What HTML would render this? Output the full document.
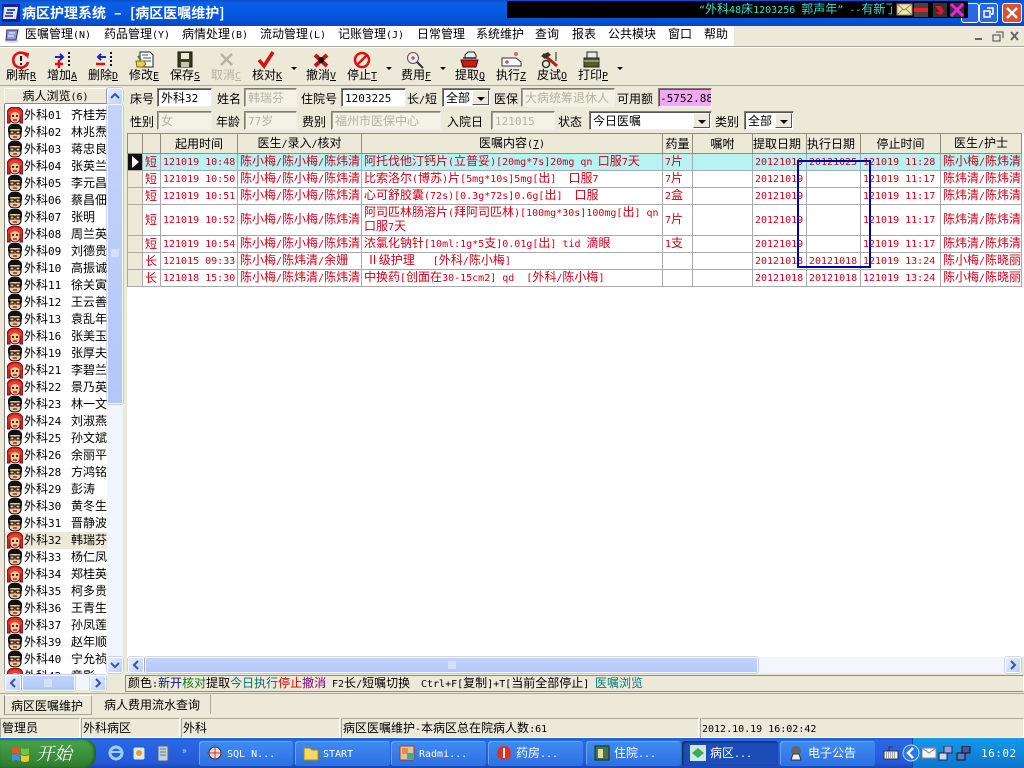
<!DOCTYPE html>
<html lang="zh"><head><meta charset="utf-8"><title>病区护理系统</title>
<style>
html,body{margin:0;padding:0;width:1024px;height:768px;overflow:hidden;background:#ece9d8}
body{position:relative;font:12px/14px "WenQuanYi Zen Hei","Noto Sans CJK SC",sans-serif;color:#000}
i{font:normal 10px/14px "DejaVu Sans Mono","Liberation Mono",monospace}
.a{position:absolute;white-space:nowrap}
.bx{position:absolute;box-sizing:border-box;overflow:hidden;white-space:nowrap}
.inp{position:absolute;box-sizing:border-box;height:19px;background:#fff;border:1px solid;border-color:#7f7d72 #eee #eee #7f7d72;box-shadow:inset 1px 1px 0 #555;padding:2px 0 0 3px;overflow:hidden;white-space:nowrap}
.inp i{font-size:11px;color:inherit}
.dis{background:#f3f2e4;color:#b4b3a2;box-shadow:inset 1px 1px 0 #a8a698}
.arr{position:absolute;right:1px;top:1px;bottom:1px;width:17px;background:#ece9d8;border:1px solid;border-color:#fff #555 #555 #fff;box-sizing:border-box}
.arr:after{content:"";position:absolute;left:4px;top:6px;border:4px solid transparent;border-top:4px solid #000;border-bottom:0}
.tb{position:absolute;top:68px;width:42px;text-align:center;white-space:nowrap}
.tb i,.und{text-decoration:underline}
.dd{position:absolute;top:67px;border:3px solid transparent;border-top:3px solid #000;border-bottom:0}
table{position:absolute;left:127px;top:133px;border-collapse:collapse;table-layout:fixed;width:894px;color:#d00018;background:#fff}
td,th{border:1px solid #a9a9a9;padding:0 0 0 2px;font-weight:normal;overflow:hidden;white-space:nowrap;height:16px;line-height:10px;vertical-align:middle}
td i,th i{line-height:10px}
th{background:#ece9d8;color:#000;text-align:center;height:19px;border-color:#8f8d80;padding:0}
td.ind{background:#ece9d8;padding:0}
td.w{white-space:normal;word-break:break-all;line-height:12px}
td.w i{line-height:12px}
tr.sel td{background:#b6f3f3}
.p{position:absolute;left:5px;width:102px;height:17px;overflow:hidden;white-space:nowrap}
.p svg{position:absolute;left:2px;top:0}
.p b{position:absolute;left:19px;top:1px;font-weight:normal}
.p b i{font-size:11px}
.p u{position:absolute;left:66px;top:1px;text-decoration:none}
.sbtn{position:absolute;box-sizing:border-box;width:16px;height:16px;background:linear-gradient(135deg,#e8effe,#bccff8);border:1px solid #fff;border-radius:2px;box-shadow:0 0 0 .5px #9db4e6}
.sbtn svg{display:block;margin:2px}
.thumb{position:absolute;box-sizing:border-box;background:linear-gradient(#c3d4fa,#b2c8f6);border:1px solid #f4f7ff;border-radius:2px;box-shadow:0 0 0 .5px #98ade0}
.st{position:absolute;top:718px;height:20px;box-sizing:border-box;border:1px solid;border-color:#aca899 #fff #fff #aca899;padding:2px 0 0 1px;white-space:nowrap;overflow:hidden}
.task{position:absolute;top:741px;height:25px;box-sizing:border-box;border-radius:3px;background:linear-gradient(#3f8cf3,#2f6fe0);color:#fff;padding:5px 0 0 28px;white-space:nowrap;box-shadow:inset 1px 1px 0 #6aa4f5}
.task svg{position:absolute;left:8px;top:4px}
</style></head><body>
<svg width="0" height="0" style="position:absolute"><defs>
<symbol id="m" viewBox="0 0 16 17"><path d="M2 5Q2 0 8 0t6 5v6q0 5-6 5t-6-5z" fill="#f6c79a" stroke="#000"/><path d="M1 9V4Q2 0 8 0t7 4v5l-1-3-2-1H4L2 6z" fill="#111"/><path d="M3 7h4v3H3zM9 7h4v3H9zM7 8h2" fill="none" stroke="#000"/><path d="M6 13h4" stroke="#a22" stroke-width="1.500"/></symbol>
<symbol id="f" viewBox="0 0 16 17"><path d="M0 16V6Q1 0 8 0t8 6v10h-3V8H3v8z" fill="#d42a1c" stroke="#702"/><path d="M3 6q5-3 10 0v6q-1 4-5 4t-5-4z" fill="#f6c79a" stroke="#611"/><path d="M5 9h2M9 9h2" stroke="#000" stroke-width="1.500"/><path d="M6 13h4" stroke="#c11" stroke-width="1.500"/><path d="M2 7Q8 0 14 7" fill="none" stroke="#e8402c" stroke-width="3"/></symbol>
<symbol id="up" viewBox="0 0 10 10"><path d="M1 7l4-4 4 4" fill="none" stroke="#34589c" stroke-width="2"/></symbol>
<symbol id="dn" viewBox="0 0 10 10"><path d="M1 3l4 4 4-4" fill="none" stroke="#34589c" stroke-width="2"/></symbol>
<symbol id="lf" viewBox="0 0 10 10"><path d="M7 1L3 5l4 4" fill="none" stroke="#34589c" stroke-width="2"/></symbol>
<symbol id="rt" viewBox="0 0 10 10"><path d="M3 1l4 4-4 4" fill="none" stroke="#34589c" stroke-width="2"/></symbol>
</defs></svg>

<!-- title bar -->
<div class="bx" style="left:0;top:0;width:1024px;height:26px;background:linear-gradient(#0a4fc8,#0b5fe6 12%,#0455dc 70%,#0648c0)"></div>
<svg class="a" style="left:2px;top:4px" width="18" height="18" viewBox="0 0 18 18"><rect width="18" height="18" fill="#10249a"/><path d="M2 3h14l-2 12H1z" fill="#dfe6ff"/><path d="M5 6h8M4 9h7M3 12h8" stroke="#10249a" stroke-width="1.600"/></svg>
<div class="a" style="left:22px;top:5px;color:#fff;font-size:14px;line-height:16px;font-weight:bold">病区护理系统</div>
<div class="a" style="left:114px;top:5px;color:#fff;font-size:14px;line-height:16px;font-weight:bold">–</div>
<div class="a" style="left:130px;top:5px;color:#fff;font-size:14px;line-height:16px;font-weight:bold">[病区医嘱维护]</div>
<div class="bx" style="left:979px;top:3px;width:19px;height:20px;border:1px solid #fff;border-radius:3px;background:#2c68e6"><svg width="17" height="18"><path d="M7 4h6v6h-2M4 7h6v6H4z" fill="none" stroke="#fff" stroke-width="1.500"/></svg></div>
<div class="bx" style="left:1002px;top:3px;width:20px;height:20px;border:1px solid #fff;border-radius:3px;background:#dc5030"><svg width="18" height="18"><path d="M4 4l10 10M14 4L4 14" stroke="#fff" stroke-width="2.400"/></svg></div>
<div class="bx" style="left:961px;top:3px;width:18px;height:20px;border:1px solid #fff;border-radius:3px;background:#2c68e6"></div>
<div class="bx" style="left:507px;top:1px;width:461px;height:17px;background:#000"></div>
<div class="bx" style="left:699px;top:2px;width:193px;height:15px;color:#33dfd8"><i>“</i>外科<i>48</i>床<i>1203256 </i>郭声年<i>” --</i>有新了</div>
<svg class="a" style="left:896px;top:2px" width="70" height="16" viewBox="0 0 70 16"><rect x="1" y="2" width="15" height="11" fill="#efe6a0" stroke="#887"/><path d="M1 2l7 6 8-6M1 13l6-6M16 13l-6-6" fill="none" stroke="#887"/><rect x="18" y="1" width="14" height="14" fill="#444"/><rect x="18" y="6" width="14" height="4" fill="#e22"/><rect x="37" y="1" width="14" height="14" fill="#333"/><path d="M39 4h6l3 5-3 4-6-3h5z" fill="#e0182a"/><rect x="54" y="1" width="14" height="14" fill="#333"/><path d="M55 2l12 12M67 2L55 14" stroke="#f020e8" stroke-width="3"/></svg>

<!-- menu -->
<div class="bx" style="left:0;top:26px;width:734px;height:20px;background:#fff"></div>
<svg class="a" style="left:4px;top:27px" width="16" height="17" viewBox="0 0 16 17"><ellipse cx="8" cy="14" rx="7" ry="2" fill="#d9d9ee"/><path d="M3 3h11l-2 10H2z" fill="#8a9ae0" stroke="#334"/><path d="M5 6h6M4 9h6" stroke="#fff"/></svg>
<div class="a" style="left:25px;top:27px">医嘱管理<i>(N)</i></div>
<div class="a" style="left:104px;top:27px">药品管理<i>(Y)</i></div>
<div class="a" style="left:182px;top:27px">病情处理<i>(B)</i></div>
<div class="a" style="left:260px;top:27px">流动管理<i>(L)</i></div>
<div class="a" style="left:338px;top:27px">记账管理<i>(J)</i></div>
<div class="a" style="left:417px;top:27px">日常管理</div>
<div class="a" style="left:476px;top:27px">系统维护</div>
<div class="a" style="left:535px;top:27px">查询</div>
<div class="a" style="left:572px;top:27px">报表</div>
<div class="a" style="left:608px;top:27px">公共模块</div>
<div class="a" style="left:668px;top:27px">窗口</div>
<div class="a" style="left:704px;top:27px">帮助</div>
<svg class="a" style="left:972px;top:27px" width="50" height="18" viewBox="0 0 50 18"><path d="M3 12h7" stroke="#666" stroke-width="2"/><path d="M24 5h7v6M21 8h7v6h-7z" fill="none" stroke="#666" stroke-width="1.300"/><path d="M39 5l7 8M46 5l-7 8" stroke="#666" stroke-width="2"/></svg>

<!-- toolbar -->
<div class="bx" style="left:0;top:46px;width:1024px;height:1px;background:#aca899"></div>
<div class="bx" style="left:0;top:47px;width:1024px;height:1px;background:#fff"></div>
<div class="bx" style="left:0;top:85px;width:1024px;height:1px;background:#aca899"></div>
<svg class="a" style="left:0;top:51px" width="640" height="18" viewBox="0 0 640 18">
<path d="M27 5a7.500 7.500 0 1 0 1 6" fill="none" stroke="#e01010" stroke-width="2.600"/><path d="M24 1l5 1-1 6z" fill="#e01010"/><path d="M21 5v5M21 12v2" stroke="#111" stroke-width="2"/>
<path d="M55 6h7M60 3l3 3-3 3" fill="none" stroke="#1a22c8" stroke-width="2"/><path d="M55 13h8M59 9v8" stroke="#e01010" stroke-width="2.500"/><path d="M68 2h2M68 6h2M68 10h2M68 14h2" stroke="#111" stroke-width="2"/>
<path d="M98 6h8M101 3l-3 3 3 3" fill="none" stroke="#1a22c8" stroke-width="2"/><path d="M96 13h9" stroke="#e01010" stroke-width="2.500"/><path d="M110 2h2M110 6h2M110 10h2M110 14h2" stroke="#111" stroke-width="2"/>
<path d="M140 1h10l3 3v12h-13z" fill="#fff" stroke="#222"/><path d="M142 4h6M143 7h8M143 10h8" stroke="#555"/><path d="M136 10h8l2 3-3 3h-6z" fill="#f2c94c" stroke="#7a6a10"/><path d="M138 5l3 4" stroke="#2a8a30" stroke-width="2"/>
<path d="M178 1h14v15h-14z" fill="#3e3e18" stroke="#111"/><rect x="181" y="2" width="8" height="6" fill="#e8e8d8"/><rect x="181" y="11" width="8" height="5" fill="#c4c4b8"/>
<path d="M221 3l11 11M232 3l-11 11" stroke="#b4b2a6" stroke-width="2.500"/>
<path d="M259 9l5 6 9-14" fill="none" stroke="#dd1010" stroke-width="3.500"/>
<path d="M315 4l12 11M327 4l-12 11" stroke="#d01010" stroke-width="4"/><circle cx="321" cy="9" r="3" fill="#111"/>
<circle cx="362" cy="9" r="7" fill="none" stroke="#e01010" stroke-width="2.500"/><path d="M357 14l10-10" stroke="#e01010" stroke-width="2.500"/>
<circle cx="413" cy="7" r="5.500" fill="#f4eef0" stroke="#555"/><path d="M411 7h4M413 5v4" stroke="#d01030"/><path d="M417 11l6 6" stroke="#333" stroke-width="2"/>
<path d="M465 4l3-3h6l2 3v3h-11z" fill="#eee" stroke="#222"/><path d="M461 9h17l-2 7h-13z" fill="#d01818" stroke="#400"/><path d="M463 7h13" stroke="#222" stroke-width="1.500"/>
<path d="M502 7h14l5 4v4h-19z" fill="#f8f8f8" stroke="#333"/><path d="M507 9v4M505 11h4" stroke="#d01818"/><circle cx="516" cy="3" r="2" fill="#e86070"/>
<path d="M543 3l14 12" stroke="#b82010" stroke-width="3"/><path d="M541 5l7-4 3 3-6 4z" fill="#332"/><circle cx="546" cy="13" r="3.500" fill="none" stroke="#333" stroke-width="1.500"/><path d="M556 1v9" stroke="#222"/>
<path d="M587 1h10v6h-10z" fill="#e8e8e8" stroke="#222"/><path d="M584 7h15v9h-15z" fill="#5a5a2a" stroke="#222"/><path d="M584 10h15" stroke="#ccc"/>
</svg>
<div class="tb" style="left:0">刷新<i>R</i></div>
<div class="tb" style="left:41px">增加<i>A</i></div>
<div class="tb" style="left:82px">删除<i>D</i></div>
<div class="tb" style="left:123px">修改<i>E</i></div>
<div class="tb" style="left:164px">保存<i>S</i></div>
<div class="tb" style="left:205px;color:#b4b2a6">取消<i>C</i></div>
<div class="tb" style="left:246px">核对<i>K</i></div><div class="dd" style="left:291px"></div>
<div class="tb" style="left:300px">撤消<i>V</i></div>
<div class="tb" style="left:341px">停止<i>T</i></div><div class="dd" style="left:386px"></div>
<div class="tb" style="left:395px">费用<i>F</i></div><div class="dd" style="left:440px"></div>
<div class="tb" style="left:449px">提取<i>Q</i></div>
<div class="tb" style="left:490px">执行<i>Z</i></div>
<div class="tb" style="left:531px">皮试<i>O</i></div>
<div class="tb" style="left:572px">打印<i>P</i></div><div class="dd" style="left:617px"></div>

<!-- left panel -->
<div class="bx" style="left:4px;top:88px;width:103px;height:16px;background:#ece9d8;border:1px solid;border-color:#fff #888 #888 #fff;text-align:center;line-height:13px">病人浏览<i>(6)</i></div>
<div class="bx" style="left:4px;top:104px;width:103px;height:570px;background:#fff;border-left:1px solid #808080"></div>
<div class="p" style="top:107px"><svg width="16" height="17"><use href="#f"/></svg><b>外科<i>01</i></b><u>齐桂芳</u></div>
<div class="p" style="top:124px"><svg width="16" height="17"><use href="#m"/></svg><b>外科<i>02</i></b><u>林兆焘</u></div>
<div class="p" style="top:141px"><svg width="16" height="17"><use href="#m"/></svg><b>外科<i>03</i></b><u>蒋忠良</u></div>
<div class="p" style="top:158px"><svg width="16" height="17"><use href="#f"/></svg><b>外科<i>04</i></b><u>张英兰</u></div>
<div class="p" style="top:175px"><svg width="16" height="17"><use href="#m"/></svg><b>外科<i>05</i></b><u>李元昌</u></div>
<div class="p" style="top:192px"><svg width="16" height="17"><use href="#m"/></svg><b>外科<i>06</i></b><u>蔡昌佃</u></div>
<div class="p" style="top:209px"><svg width="16" height="17"><use href="#m"/></svg><b>外科<i>07</i></b><u>张明</u></div>
<div class="p" style="top:226px"><svg width="16" height="17"><use href="#f"/></svg><b>外科<i>08</i></b><u>周兰英</u></div>
<div class="p" style="top:243px"><svg width="16" height="17"><use href="#m"/></svg><b>外科<i>09</i></b><u>刘德贵</u></div>
<div class="p" style="top:260px"><svg width="16" height="17"><use href="#m"/></svg><b>外科<i>10</i></b><u>高振诚</u></div>
<div class="p" style="top:277px"><svg width="16" height="17"><use href="#m"/></svg><b>外科<i>11</i></b><u>徐关寅</u></div>
<div class="p" style="top:294px"><svg width="16" height="17"><use href="#m"/></svg><b>外科<i>12</i></b><u>王云善</u></div>
<div class="p" style="top:311px"><svg width="16" height="17"><use href="#m"/></svg><b>外科<i>13</i></b><u>袁乱年</u></div>
<div class="p" style="top:328px"><svg width="16" height="17"><use href="#f"/></svg><b>外科<i>16</i></b><u>张美玉</u></div>
<div class="p" style="top:345px"><svg width="16" height="17"><use href="#m"/></svg><b>外科<i>19</i></b><u>张厚夫</u></div>
<div class="p" style="top:362px"><svg width="16" height="17"><use href="#f"/></svg><b>外科<i>21</i></b><u>李碧兰</u></div>
<div class="p" style="top:379px"><svg width="16" height="17"><use href="#f"/></svg><b>外科<i>22</i></b><u>景乃英</u></div>
<div class="p" style="top:396px"><svg width="16" height="17"><use href="#m"/></svg><b>外科<i>23</i></b><u>林一文</u></div>
<div class="p" style="top:413px"><svg width="16" height="17"><use href="#f"/></svg><b>外科<i>24</i></b><u>刘淑燕</u></div>
<div class="p" style="top:430px"><svg width="16" height="17"><use href="#m"/></svg><b>外科<i>25</i></b><u>孙文斌</u></div>
<div class="p" style="top:447px"><svg width="16" height="17"><use href="#f"/></svg><b>外科<i>26</i></b><u>余丽平</u></div>
<div class="p" style="top:464px"><svg width="16" height="17"><use href="#m"/></svg><b>外科<i>28</i></b><u>方鸿铭</u></div>
<div class="p" style="top:481px"><svg width="16" height="17"><use href="#m"/></svg><b>外科<i>29</i></b><u>彭涛</u></div>
<div class="p" style="top:498px"><svg width="16" height="17"><use href="#m"/></svg><b>外科<i>30</i></b><u>黄冬生</u></div>
<div class="p" style="top:515px"><svg width="16" height="17"><use href="#m"/></svg><b>外科<i>31</i></b><u>晋静波</u></div>
<div class="p" style="top:532px;background:#ece9d8"><svg width="16" height="17"><use href="#f"/></svg><b>外科<i>32</i></b><u>韩瑞芬</u></div>
<div class="p" style="top:549px"><svg width="16" height="17"><use href="#m"/></svg><b>外科<i>33</i></b><u>杨仁凤</u></div>
<div class="p" style="top:566px"><svg width="16" height="17"><use href="#f"/></svg><b>外科<i>34</i></b><u>郑桂英</u></div>
<div class="p" style="top:583px"><svg width="16" height="17"><use href="#m"/></svg><b>外科<i>35</i></b><u>柯多贵</u></div>
<div class="p" style="top:600px"><svg width="16" height="17"><use href="#m"/></svg><b>外科<i>36</i></b><u>王青生</u></div>
<div class="p" style="top:617px"><svg width="16" height="17"><use href="#f"/></svg><b>外科<i>37</i></b><u>孙凤莲</u></div>
<div class="p" style="top:634px"><svg width="16" height="17"><use href="#m"/></svg><b>外科<i>39</i></b><u>赵年顺</u></div>
<div class="p" style="top:651px"><svg width="16" height="17"><use href="#m"/></svg><b>外科<i>40</i></b><u>宁允祯</u></div>
<div class="p" style="top:668px;height:6px"><svg width="16" height="17"><use href="#f"/></svg><b>外科<i>42</i></b><u>章影</u></div>
<!-- left v scroll -->
<div class="bx" style="left:107px;top:88px;width:16px;height:585px;background:#f2f5fe"></div>
<div class="sbtn" style="left:107px;top:88px"><svg width="10" height="10"><use href="#up"/></svg></div>
<div class="thumb" style="left:107px;top:104px;width:16px;height:300px"></div>
<svg class="a" style="left:111px;top:249px" width="8" height="8"><path d="M0 1h8M0 3h8M0 5h8M0 7h8" stroke="#eef3ff"/></svg>
<div class="sbtn" style="left:107px;top:657px"><svg width="10" height="10"><use href="#dn"/></svg></div>
<!-- left h scroll -->
<div class="bx" style="left:4px;top:674px;width:103px;height:16px;background:#f2f5fe"></div>
<div class="sbtn" style="left:5px;top:675px"><svg width="10" height="10"><use href="#lf"/></svg></div>
<div class="thumb" style="left:22px;top:675px;width:53px;height:16px"></div>
<svg class="a" style="left:44px;top:679px" width="8" height="8"><path d="M1 0v8M3 0v8M5 0v8M7 0v8" stroke="#eef3ff"/></svg>
<div class="sbtn" style="left:90px;top:675px"><svg width="10" height="10"><use href="#rt"/></svg></div>

<!-- form -->
<div class="a" style="left:130px;top:92px">床号</div>
<div class="inp" style="left:157px;top:88px;width:55px">外科<i>32</i></div>
<div class="a" style="left:217px;top:92px">姓名</div>
<div class="inp dis" style="left:244px;top:88px;width:53px">韩瑞芬</div>
<div class="a" style="left:301px;top:92px">住院号</div>
<div class="inp" style="left:341px;top:88px;width:65px"><i>1203225</i></div>
<div class="a" style="left:407px;top:92px">长<i>/</i>短</div>
<div class="inp" style="left:442px;top:88px;width:49px">全部<span class="arr"></span></div>
<div class="a" style="left:494px;top:92px">医保</div>
<div class="inp dis" style="left:521px;top:88px;width:94px">大病统筹退休人</div>
<div class="a" style="left:617px;top:92px">可用额</div>
<div class="inp" style="left:658px;top:88px;width:54px;background:#f7a6f7;padding-left:1px"><i>-5752.88</i></div>
<div class="a" style="left:130px;top:115px">性别</div>
<div class="inp dis" style="left:157px;top:111px;width:55px">女</div>
<div class="a" style="left:216px;top:115px">年龄</div>
<div class="inp dis" style="left:244px;top:111px;width:53px"><i>77</i>岁</div>
<div class="a" style="left:302px;top:115px">费别</div>
<div class="inp dis" style="left:331px;top:111px;width:110px">福州市医保中心</div>
<div class="a" style="left:447px;top:115px">入院日</div>
<div class="inp dis" style="left:491px;top:111px;width:64px"><i>121015</i></div>
<div class="a" style="left:558px;top:115px">状态</div>
<div class="inp" style="left:589px;top:111px;width:123px">今日医嘱<span class="arr"></span></div>
<div class="a" style="left:715px;top:115px">类别</div>
<div class="inp" style="left:744px;top:111px;width:50px">全部<span class="arr"></span></div>

<!-- grid -->
<div class="bx" style="left:127px;top:133px;width:897px;height:524px;background:#fff"></div>
<table>
<colgroup><col style="width:15px"><col style="width:18px"><col style="width:77px"><col style="width:124px"><col style="width:301px"><col style="width:30px"><col style="width:60px"><col style="width:54px"><col style="width:54px"><col style="width:80px"><col style="width:81px"></colgroup>
<tr style="height:20px"><th></th><th></th><th>起用时间</th><th>医生<i>/</i>录入<i>/</i>核对</th><th>医嘱内容<i>(<span class="und">7</span>)</i></th><th>药量</th><th>嘱咐</th><th style="text-align:left">提取日期</th><th style="text-align:left">执行日期</th><th>停止时间</th><th>医生<i>/</i>护士</th></tr>
<tr class="sel" style="height:17px"><td class="ind" style="background:#111;text-align:center"><svg width="9" height="12" style="display:block;margin:auto"><path d="M1 0l7 6-7 6z" fill="#fff"/></svg></td><td>短</td><td><i>121019 10:48</i></td><td>陈小梅<i>/</i>陈小梅<i>/</i>陈炜清</td><td>阿托伐他汀钙片<i>(</i>立普妥<i>)[20mg*7s]20mg qn</i>&nbsp;&nbsp;口服<i>7</i>天</td><td><i>7</i>片</td><td></td><td><i>20121019</i></td><td><i>20121025</i></td><td><i>121019 11:28</i></td><td>陈小梅<i>/</i>陈炜清</td></tr>
<tr style="height:17px"><td class="ind"></td><td>短</td><td><i>121019 10:50</i></td><td>陈小梅<i>/</i>陈小梅<i>/</i>陈炜清</td><td>比索洛尔<i>(</i>博苏<i>)</i>片<i>[5mg*10s]5mg[</i>出<i>]&nbsp; </i>口服<i>7</i></td><td><i>7</i>片</td><td></td><td><i>20121019</i></td><td></td><td><i>121019 11:17</i></td><td>陈炜清<i>/</i>陈炜清</td></tr>
<tr style="height:17px"><td class="ind"></td><td>短</td><td><i>121019 10:51</i></td><td>陈小梅<i>/</i>陈小梅<i>/</i>陈炜清</td><td>心可舒胶囊<i>(72s)[0.3g*72s]0.6g[</i>出<i>]&nbsp; </i>口服</td><td><i>2</i>盒</td><td></td><td><i>20121019</i></td><td></td><td><i>121019 11:17</i></td><td>陈炜清<i>/</i>陈炜清</td></tr>
<tr style="height:31px"><td class="ind"></td><td>短</td><td><i>121019 10:52</i></td><td>陈小梅<i>/</i>陈小梅<i>/</i>陈炜清</td><td class="w">阿司匹林肠溶片<i>(</i>拜阿司匹林<i>)[100mg*30s]100mg[</i>出<i>] qn</i><br>口服<i>7</i>天</td><td><i>7</i>片</td><td></td><td><i>20121019</i></td><td></td><td><i>121019 11:17</i></td><td>陈炜清<i>/</i>陈炜清</td></tr>
<tr style="height:17px"><td class="ind"></td><td>短</td><td><i>121019 10:54</i></td><td>陈小梅<i>/</i>陈小梅<i>/</i>陈炜清</td><td>浓氯化钠针<i>[10ml:1g*5</i>支<i>]0.01g[</i>出<i>] tid </i>滴眼</td><td><i>1</i>支</td><td></td><td><i>20121019</i></td><td></td><td><i>121019 11:17</i></td><td>陈炜清<i>/</i>陈炜清</td></tr>
<tr style="height:17px"><td class="ind"></td><td>长</td><td><i>121015 09:33</i></td><td>陈小梅<i>/</i>陈炜清<i>/</i>余姗</td><td>&nbsp;Ⅱ级护理<i>&nbsp;&nbsp; [</i>外科<i>/</i>陈小梅<i>]</i></td><td></td><td></td><td><i>20121018</i></td><td><i>20121018</i></td><td><i>121019 13:24</i></td><td>陈小梅<i>/</i>陈晓丽</td></tr>
<tr style="height:17px"><td class="ind"></td><td>长</td><td><i>121018 15:30</i></td><td>陈小梅<i>/</i>陈炜清<i>/</i>陈炜清</td><td>中换药<i>[</i>创面在<i>30-15cm2] qd&nbsp; [</i>外科<i>/</i>陈小梅<i>]</i></td><td></td><td></td><td><i>20121018</i></td><td><i>20121018</i></td><td><i>121019 13:24</i></td><td>陈小梅<i>/</i>陈晓丽</td></tr>
</table>
<div class="bx" style="left:797px;top:160px;width:74px;height:108px;border:2px solid #0000a8"></div>
<!-- main h scroll -->
<div class="bx" style="left:127px;top:657px;width:894px;height:16px;background:#f3f6fe"></div>
<div class="sbtn" style="left:128px;top:657px"><svg width="10" height="10"><use href="#lf"/></svg></div>
<div class="thumb" style="left:145px;top:657px;width:613px;height:16px"></div>
<svg class="a" style="left:448px;top:661px" width="8" height="8"><path d="M1 0v8M3 0v8M5 0v8M7 0v8" stroke="#eef3ff"/></svg>
<div class="sbtn" style="left:1005px;top:657px"><svg width="10" height="10"><use href="#rt"/></svg></div>
<!-- legend -->
<div class="bx" style="left:125px;top:675px;width:899px;height:17px;border:1px solid;border-color:#8f8d80 #fff #8f8d80 #8f8d80"></div>
<div class="a" style="left:128px;top:676px">颜色<i>:</i><span style="color:#101090">新开</span><span style="color:#108010">核对</span>提取<span style="color:#007070">今日执行</span><span style="color:#e00000">停止</span><span style="color:#800080">撤消</span></div>
<div class="a" style="left:332px;top:676px"><i>F2</i>长<i>/</i>短嘱切换</div>
<div class="a" style="left:421px;top:676px"><i>Ctrl+F[</i>复制<i>]+T[</i>当前全部停止<i>]</i></div>
<div class="a" style="left:595px;top:676px;color:#008080">医嘱浏览</div>
<!-- tabs -->
<div class="bx" style="left:0;top:693px;width:1024px;height:1px;background:#aca899"></div>
<div class="bx" style="left:4px;top:695px;width:88px;height:20px;border:1px solid;border-color:#fff #aca899 #aca899 #888;padding:3px 0 0 6px">病区医嘱维护</div>
<div class="a" style="left:104px;top:698px">病人费用流水查询</div>
<div class="bx" style="left:210px;top:695px;width:1px;height:19px;background:#aca899"></div>
<!-- status -->
<div class="st" style="left:0;width:80px">管理员</div>
<div class="st" style="left:81px;width:99px">外科病区</div>
<div class="st" style="left:181px;width:159px">外科</div>
<div class="st" style="left:341px;width:358px">病区医嘱维护<i>-</i>本病区总在院病人数<i>:61</i></div>
<div class="st" style="left:700px;width:324px"><i>2012.10.19 16:02:42</i></div>

<!-- taskbar -->
<div class="bx" style="left:0;top:738px;width:1024px;height:30px;background:linear-gradient(#1f5ed8,#2a68e6 10%,#2458d6 85%,#1a46b0)"></div>
<div class="bx" style="left:0;top:739px;width:96px;height:29px;background:linear-gradient(#4aa44a,#3a8d3a 60%,#2f7a30);border-radius:0 12px 12px 0;box-shadow:inset -2px 0 3px #1e5c20"></div>
<svg class="a" style="left:11px;top:745px" width="19" height="18" viewBox="0 0 19 18"><path d="M1 3q4-2 8 0v6q-4-2-8 0z" fill="#e8542a"/><path d="M10 3q4 2 8 0v6q-4 2-8 0z" fill="#7cc040"/><path d="M1 10q4-2 8 0v6q-4-2-8 0z" fill="#4a88e8"/><path d="M10 10q4 2 8 0v6q-4 2-8 0z" fill="#f5c830"/></svg>
<div class="a" style="left:36px;top:743px;color:#fff;font:italic 18px/20px 'Noto Serif CJK SC',serif">开始</div>
<svg class="a" style="left:108px;top:744px" width="66" height="18" viewBox="0 0 66 18"><circle cx="8" cy="9" r="6" fill="none" stroke="#9ed0ff" stroke-width="3"/><path d="M3 8h11" stroke="#9ed0ff" stroke-width="2"/><rect x="25" y="3" width="12" height="13" rx="2" fill="#dbe8ff" stroke="#16a"/><circle cx="31" cy="9" r="3" fill="#e8a020"/><rect x="50" y="2" width="10" height="15" fill="#c8d0e0" stroke="#567"/><path d="M52 5h6M52 8h6M52 11h6" stroke="#678"/></svg>
<div class="a" style="left:182px;top:743px;color:#cfe0ff;font-size:10px">»</div>
<div class="task" style="left:199px;width:94px"><svg width="16" height="16"><circle cx="8" cy="8" r="6" fill="#ddd" stroke="#333"/><path d="M8 0v16M0 8h16" stroke="#c33"/></svg><i>SQL N...</i></div>
<div class="task" style="left:295px;width:95px"><svg width="16" height="16"><path d="M1 3h6l2 2h6v10H1z" fill="#f5d76a" stroke="#a80"/></svg><i>START</i></div>
<div class="task" style="left:391px;width:95px"><svg width="16" height="16"><rect x="1" y="1" width="14" height="14" fill="#d8c8a0" stroke="#a33"/><rect x="3" y="3" width="6" height="6" fill="#e84"/><rect x="8" y="8" width="6" height="6" fill="#4a8"/></svg><i>Radmi...</i></div>
<div class="task" style="left:488px;width:95px"><svg width="16" height="16"><circle cx="8" cy="8" r="7" fill="#e03020"/><rect x="7" y="3" width="2" height="10" fill="#fff"/></svg>药房<i>...</i></div>
<div class="task" style="left:586px;width:95px"><svg width="16" height="16"><rect x="1" y="1" width="14" height="14" fill="#3a7a4a" stroke="#222"/><rect x="4" y="4" width="5" height="9" fill="#e8d8a0"/></svg>住院<i>...</i></div>
<div class="task" style="left:682px;width:96px;background:#1d4db8;box-shadow:inset 1px 1px 2px #123"><svg width="16" height="16"><rect width="16" height="16" fill="#cfe8e0"/><path d="M2 8l6-5 6 5-6 5z" fill="#3caa60"/></svg>病区<i>...</i></div>
<div class="task" style="left:780px;width:95px"><svg width="16" height="16"><circle cx="8" cy="6" r="5" fill="#666"/><path d="M3 15l2-6h6l2 6z" fill="#eee" stroke="#333"/></svg>电子公告</div>
<svg class="a" style="left:883px;top:745px" width="16" height="16"><rect x="1" y="6" width="14" height="8" fill="#eee" stroke="#333"/><path d="M3 8h10M3 10h10M3 12h10" stroke="#555" stroke-dasharray="1 1"/><path d="M6 6V2h4" fill="none" stroke="#333"/></svg>
<div class="bx" style="left:912px;top:738px;width:112px;height:30px;background:linear-gradient(#149ae8,#1088dc 50%,#0e74cc);border-left:1px solid #0a4ca8"></div>
<svg class="a" style="left:902px;top:744px" width="18" height="18"><circle cx="9" cy="9" r="8" fill="#2c78e8" stroke="#bcd8ff"/><path d="M11 4L6 9l5 5" fill="none" stroke="#fff" stroke-width="2.500"/></svg>
<svg class="a" style="left:922px;top:746px" width="52" height="16" viewBox="0 0 52 16"><rect x="0" y="2" width="14" height="10" fill="#f4f4f4" stroke="#889"/><path d="M0 2l7 5 7-5" fill="none" stroke="#889"/><rect x="22" y="0" width="8" height="7" fill="#8aa8e8" stroke="#224"/><rect x="17" y="7" width="8" height="7" fill="#c8d8f8" stroke="#224"/><rect x="40" y="0" width="8" height="7" fill="#48589a" stroke="#112"/><rect x="35" y="7" width="8" height="7" fill="#6878b0" stroke="#112"/></svg>
<div class="a" style="left:981px;top:746px;color:#fff"><i style="font-size:11px;letter-spacing:.5px">16:02</i></div>
</body></html>
